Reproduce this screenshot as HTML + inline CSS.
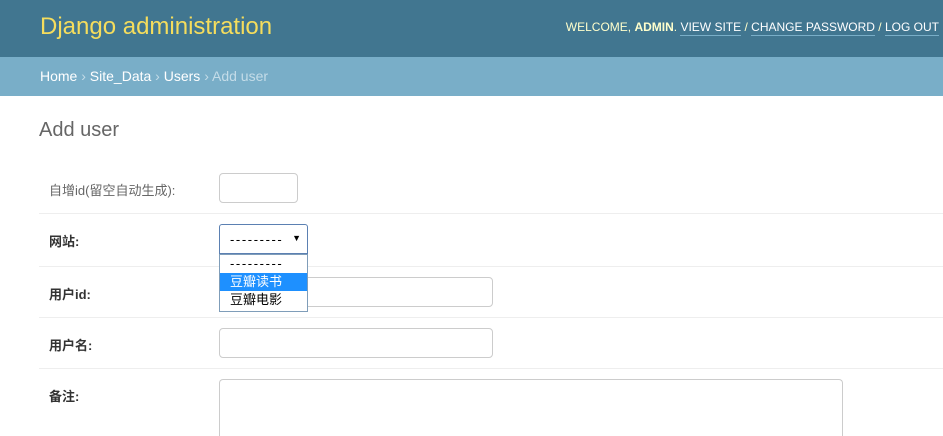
<!DOCTYPE html>
<html><head><meta charset="utf-8"><style>
*{box-sizing:border-box;margin:0;padding:0}
html,body{width:943px;height:436px;overflow:hidden}
body{background:#fff;font-family:"Liberation Sans","Noto Sans CJK SC",sans-serif;position:relative}
.hdr{position:absolute;left:0;top:0;width:943px;height:57px;background:#417690}
.title{position:absolute;left:40px;top:13px;font-size:24px;color:#f5dd5d;font-weight:normal}
.user{position:absolute;right:4px;top:20px;font-size:12px;color:#ffc}
.user b{color:#ffc}
.user a{color:#fff;text-decoration:none;border-bottom:1px solid #79aec8;padding-bottom:1px}
.bc{position:absolute;left:0;top:57px;width:943px;height:39px;background:#79aec8;font-size:14px;color:#fff;padding:11px 0 0 40px}
.bc .s{color:#c4dce8}
.bc .c{color:#c4dce8}
h1{position:absolute;left:39px;top:119px;font-size:20px;font-weight:300;color:#666}
.line{position:absolute;left:39px;width:904px;height:1px;background:#eee}
.lbl{position:absolute;left:49px;font-size:13px;color:#333}
.lbl.n{color:#666}
.inp{position:absolute;left:219px;border:1px solid #ccc;border-radius:4px;background:#fff}
.ta{border-bottom:none;border-radius:4px 4px 0 0}
.sel{position:absolute;left:219px;top:224px;width:89px;height:30px;border:1px solid #5b80b2;border-radius:3px 3px 0 0;font-size:13px;padding:7px 0 0 10px;background:#fff}
.arr{position:absolute;right:6px;top:8px;font-size:9px;letter-spacing:0}
.dash{letter-spacing:1.6px}
.dd{position:absolute;left:219px;top:254px;width:89px;height:58px;border:1px solid #7f9db9;background:#fff;font-size:13px}
.dd div{height:18px;line-height:18px;padding-left:10px}
.dd .h{background:#1e90ff;color:#fff}
</style></head><body>
<div class="hdr"><div class="title">Django administration</div>
<div class="user">WELCOME, <b>ADMIN</b>. <a>VIEW SITE</a> / <a>CHANGE PASSWORD</a> / <a>LOG OUT</a></div></div>
<div class="bc">Home <span class="s">›</span> Site_Data <span class="s">›</span> Users <span class="s">›</span> <span class="c">Add user</span></div>
<h1>Add user</h1>
<div class="lbl n" style="top:180px">自增id(留空自动生成):</div>
<div class="inp" style="top:173px;width:79px;height:30px"></div>
<div class="line" style="top:213px"></div>
<div class="lbl" style="top:231px;font-weight:bold">网站:</div>
<div class="line" style="top:266px"></div>
<div class="lbl" style="top:284px;font-weight:bold">用户id:</div>
<div class="inp" style="top:277px;width:274px;height:30px"></div>
<div class="line" style="top:317px"></div>
<div class="lbl" style="top:335px;font-weight:bold">用户名:</div>
<div class="inp" style="top:328px;width:274px;height:30px"></div>
<div class="line" style="top:368px"></div>
<div class="lbl" style="top:386px;font-weight:bold">备注:</div>
<div class="inp ta" style="top:379px;width:624px;height:57px"></div>
<div class="sel"><span class="dash">---------</span><span class="arr">▼</span></div>
<div class="dd"><div class="dash">---------</div><div class="h">豆瓣读书</div><div>豆瓣电影</div></div>
</body></html>
